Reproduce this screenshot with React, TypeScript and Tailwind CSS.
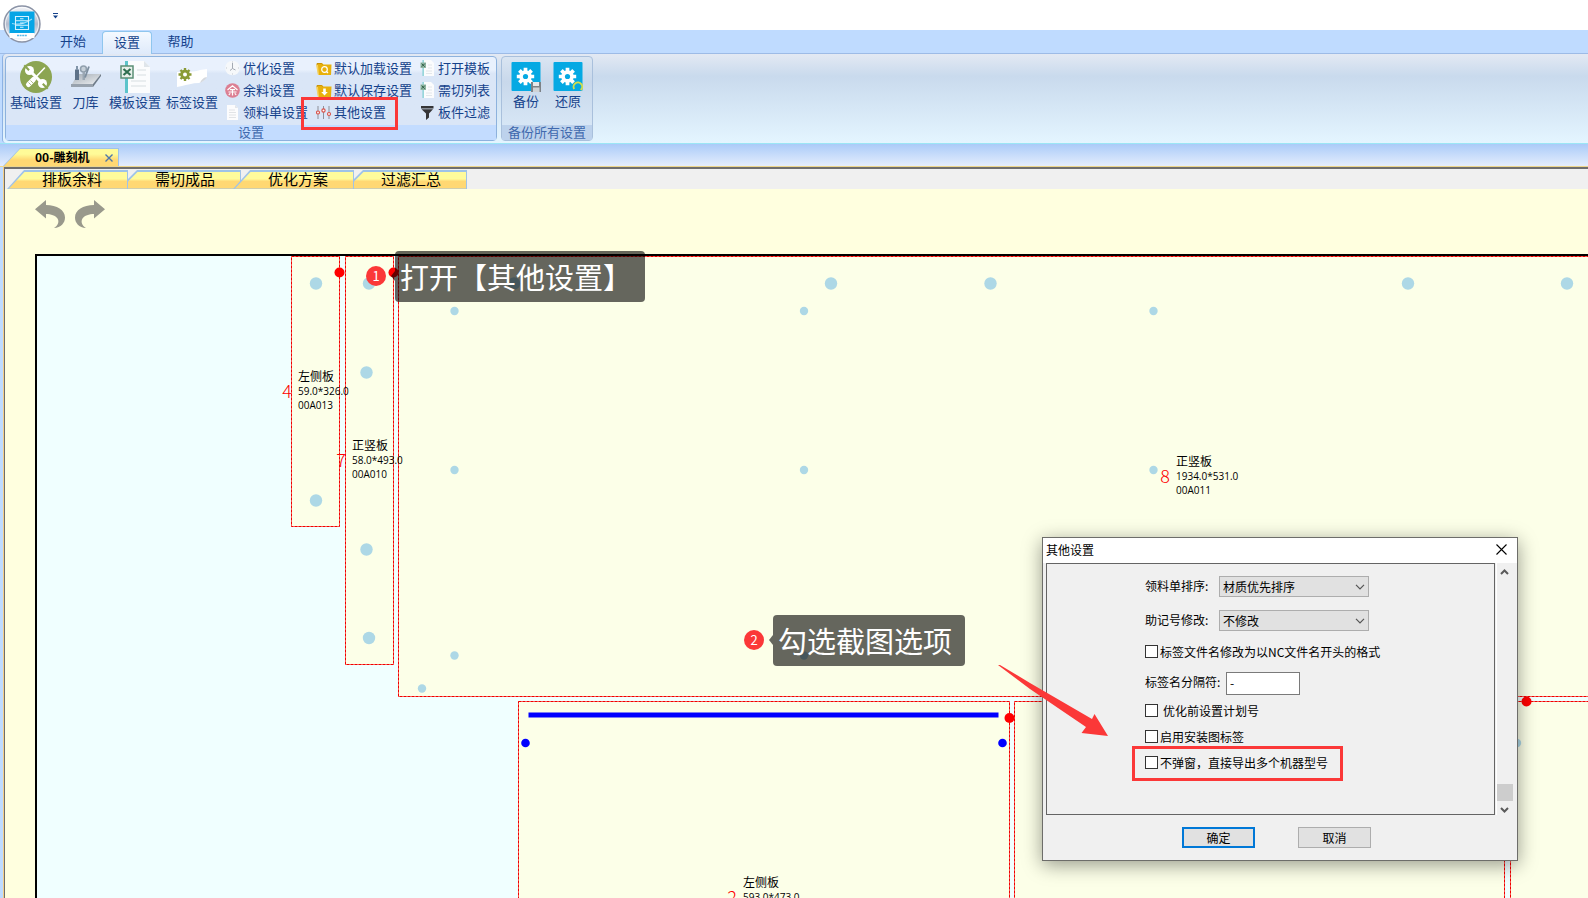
import React from "react";

type IconProps = { className?: string };

const panels = [
  { x: 254.5, y: 0.5, w: 48, h: 270 },
  { x: 308.5, y: 0.5, w: 48, h: 408 },
  { x: 361.5, y: 0.5, w: 1500, h: 440 },
  { x: 481.5, y: 445.5, w: 491, h: 600 },
  { x: 977.5, y: 445.5, w: 490, h: 600 },
  { x: 1473.5, y: 445.5, w: 600, h: 600 },
];

const largeHoles = [
  [279, 27.5], [279, 244.5], [332, 27.5], [329.5, 116.5], [329.5, 293.5], [332, 382],
  [477, 27.5], [794, 27.5], [953.5, 27.5], [1371, 27.5], [1530, 27.5],
];

const smallHoles = [
  [417.5, 55], [417.5, 214], [417.5, 399.5], [767, 55], [767, 214], [767, 399.5],
  [1116.5, 55], [1116.5, 214], [385, 432.5], [1480, 487],
];

const redDots = [[302.5, 16.5], [356.5, 16.5], [972.5, 462], [1489.5, 445.5]];
const blueDots = [[488.5, 487], [965.5, 487]];

const partLabels = [
  { id: "4", name: "左侧板", size: "59.0*326.0", code: "00A013", place: "left-[245px] top-[110px]" },
  { id: "7", name: "正竖板", size: "58.0*493.0", code: "00A010", place: "left-[299px] top-[179px]" },
  { id: "8", name: "正竖板", size: "1934.0*531.0", code: "00A011", place: "left-[1123px] top-[195px]" },
  { id: "2", name: "左侧板", size: "593.0*473.0", code: "", place: "left-[690px] top-[616px]" },
];

function AppOrb() {
  return (
    <svg viewBox="0 0 38 38" className="size-[38px]" aria-hidden="true">
      <defs>
        <linearGradient id="orb" x1="0" y1="0" x2="0" y2="1">
          <stop offset="0" stopColor="#f4f6fa" />
          <stop offset=".5" stopColor="#b4bccd" />
          <stop offset=".75" stopColor="#d9dfea" />
          <stop offset="1" stopColor="#ffffff" />
        </linearGradient>
      </defs>
      <circle cx="19" cy="19" r="18" fill="url(#orb)" stroke="#8b93a6" strokeWidth="1.4" />
      <circle cx="19" cy="19" r="16.6" fill="none" stroke="#fff" strokeOpacity=".7" />
      <rect x="6.500" y="6.500" width="25" height="22" fill="#06a5e6" />
      <rect x="6.500" y="28" width="25" height="5" fill="#fff" />
      <path d="M14 30.500h10" stroke="#56b8e8" strokeWidth="1.6" strokeDasharray="2 .6" />
      <g fill="none" stroke="#d6f2ff" strokeWidth="1.1">
        <path d="M12.500 11.500h13v13h-13zM12.500 15.800h13M12.500 20.200h13M17 13.700h3.500M17 18h3.500M17 22.300h3.500" />
        <path d="M9 18.500c6 1.500 14-.5 20-4.500" strokeOpacity=".7" />
      </g>
    </svg>
  );
}

function ToolsIcon() {
  return (
    <svg viewBox="0 0 32 32" className="size-8" aria-hidden="true">
      <circle cx="16" cy="16" r="16" fill="#8ca552" />
      <g stroke="#fff" strokeLinecap="round" fill="none">
        <path d="M9.500 9.500 22.500 22.500" strokeWidth="3" />
        <path d="M24.500 7 15 17" strokeWidth="1.600" />
        <path d="M13.500 18.500 8.500 23.500" strokeWidth="5" />
      </g>
      <circle cx="9.500" cy="9.500" r="4.500" fill="#fff" />
      <circle cx="22.500" cy="22.500" r="4.500" fill="#fff" />
      <path d="M5 3.500 9.800 8.400 8.300 9.900 3.500 5zM22 23.500l1.500-1.500 5 5-1.500 1.500z" fill="#8ca552" />
      <path d="M10.500 19.500 13 22M8.500 21.500l2.500 2.500" stroke="#8ca552" strokeWidth=".7" />
    </svg>
  );
}

function KnifeIcon() {
  return (
    <svg viewBox="0 0 32 32" className="size-8" aria-hidden="true">
      <defs>
        <linearGradient id="plate" x1="0" y1="0" x2="1" y2="1">
          <stop offset="0" stopColor="#a3acb5" />
          <stop offset="1" stopColor="#eceef0" />
        </linearGradient>
      </defs>
      <path d="M8 13h23l-8 10H2z" fill="url(#plate)" />
      <path d="M1 23h22v3H1z" fill="#98a2ad" />
      <path d="M23 23l8-10v2l-8 11z" fill="#6f7b87" />
      <path d="M5 8.500h4V19H5z" fill="#5d7188" />
      <path d="M6 5h2v4H6z" fill="#8194a8" />
      <circle cx="13.500" cy="8" r="3" fill="#c6d0d9" stroke="#91a0ae" strokeWidth="1.600" />
      <path d="M12.500 11h2.500v8h-2.500z" fill="#9aa7b3" />
      <path d="M19 5.500 15 16.500" stroke="#7d8e9f" strokeWidth="1.800" />
    </svg>
  );
}

function ExcelIcon() {
  return (
    <svg viewBox="0 0 32 32" className="size-8" aria-hidden="true">
      <path d="M7 0h18l6 6v26H7z" fill="#fbfcfd" />
      <path d="M25 0v6h6" fill="#dfe5ea" />
      <path d="M6 0h3v32H6z" fill="#5cc4cb" />
      <path d="M18 9h9M18 14h9M12 20h15M12 25h15" stroke="#d8dde2" strokeWidth="1.200" />
      <rect x="2" y="5" width="12" height="12" fill="#e8f0eb" stroke="#5b8f75" strokeWidth="1.500" />
      <path d="M4.500 8l7 6M11.500 8l-7 6" stroke="#2f6f50" strokeWidth="2.200" />
    </svg>
  );
}

function SmallExcelIcon() {
  return (
    <svg viewBox="0 0 16 16" className="size-4" aria-hidden="true">
      <path d="M3 0h8l3 3v13H3z" fill="#fbfcfd" />
      <path d="M2.500 0h1.300v16H2.500z" fill="#7fcdd2" />
      <path d="M8 5h4M8 8h4M6 11h6M6 13.500h6" stroke="#dde1e5" strokeWidth=".8" />
      <rect x=".5" y="2.500" width="5.500" height="5.500" fill="#8fb5a1" />
      <path d="M1.700 3.700l3 3M4.700 3.700l-3 3" stroke="#2f5f48" />
    </svg>
  );
}

function TagIcon() {
  return (
    <svg viewBox="0 0 32 32" className="size-8" aria-hidden="true">
      <path d="M1 11c7 0 17 0 23-2l7-1v8c-3 4-5 5-8 6-7 0-12 2-17 3l-5 1z" fill="#fff" />
      <path d="M24 22c1-3 4-6 7-6-1 2-3 4-7 6z" fill="#d5d9de" />
      <circle cx="9" cy="13.500" r="4.800" fill="#8a9b35" />
      <path d="M9 7v13M2.500 13.500h13M4.500 9l9 9M13.500 9l-9 9" stroke="#8a9b35" strokeWidth="2.400" />
      <circle cx="9" cy="13.500" r="2" fill="#fff" />
    </svg>
  );
}

function ClockIcon() {
  return (
    <svg viewBox="0 0 16 16" className="size-4" aria-hidden="true">
      <circle cx="7.500" cy="8" r="7.300" fill="#f6f8fa" />
      <path d="M7.500 3v5.500M5 10.500l2.500-2 3 1.500" stroke="#a3a9b2" fill="none" />
      <path d="M7.500 1.500v1M7.500 13.500v1M1 8h1M13 8h1" stroke="#c3c9d0" />
    </svg>
  );
}

function SurplusIcon() {
  return (
    <svg viewBox="0 0 16 16" className="size-4" aria-hidden="true">
      <circle cx="7.500" cy="8.500" r="7.300" fill="#dc7f93" />
      <path d="M2.500 8 7.500 3.700l5 4.300M5 7.700h5M3.500 10h8M7.500 7.700v5.800M5.300 11.300l-1.500 1.500M9.700 11.300l1.500 1.500" stroke="#fff" strokeWidth="1.200" fill="none" />
    </svg>
  );
}

function PageIcon() {
  return (
    <svg viewBox="0 0 16 16" className="size-4" aria-hidden="true">
      <path d="M2 1h8l3 3v12H2z" fill="#fcfcfd" />
      <path d="M4 6h6M4 8.500h7M4 11h7M4 13.500h7" stroke="#d9dcdf" strokeWidth=".8" />
      <path d="M10 1v3h3" fill="#e2e6ea" />
    </svg>
  );
}

function FolderIcon({ kind }: { kind: "load" | "save" }) {
  return (
    <svg viewBox="0 0 16 16" className="size-4" aria-hidden="true">
      <path d="M1 3h5l1.500 1.500H15.500L15 15H2z" fill="#e8b10c" />
      <path d="M0 5h2l1 10H2z" fill="#f5d262" />
      <path d="M1 5V3.500h4.500l1 1.200" stroke="#c8930a" fill="none" />
      {kind === "load" ? (
        <>
          <circle cx="8.500" cy="9.500" r="2.800" fill="none" stroke="#fff" strokeWidth="1.200" />
          <path d="M10.500 11.500 12 13" stroke="#fff" strokeWidth="1.200" />
        </>
      ) : (
        <path d="M7.200 6.500h2.600v3.500h2L8.500 13.500 5.200 10h2z" fill="#fff" />
      )}
    </svg>
  );
}

function SlidersIcon() {
  return (
    <svg viewBox="0 0 16 16" className="size-4" aria-hidden="true">
      <path d="M2 2v13M7.500 2v13M13 2v13" stroke="#8d8f99" />
      <g fill="#fff" stroke="#d9534a" strokeWidth="1.200">
        <circle cx="2" cy="8.500" r="1.500" />
        <circle cx="7.500" cy="6.500" r="1.600" />
        <circle cx="13" cy="10" r="1.500" />
      </g>
    </svg>
  );
}

function FunnelIcon() {
  return (
    <svg viewBox="0 0 16 16" className="size-4" aria-hidden="true">
      <path d="M1 2h12.500v2.500H1zM1.500 5.200h11.500L9 9.500v4L6 16V9.500z" fill="#353537" />
    </svg>
  );
}

function GearTile({ kind }: { kind: "save" | "restore" }) {
  return (
    <svg viewBox="0 0 30 30" className="size-[30px]" aria-hidden="true">
      <rect x=".5" width="29" height="29" rx="1" fill="#05a9e3" />
      <circle cx="14.500" cy="14.500" r="6.200" fill="#fff" />
      <path d="M14.500 5.800v17.400M5.800 14.500h17.400M8.400 8.400l12.200 12.200M20.600 8.400 8.400 20.600" stroke="#fff" strokeWidth="3.700" />
      <circle cx="14.500" cy="14.500" r="2.600" fill="#05a9e3" />
      {kind === "save" ? (
        <>
          <rect x="20" y="20" width="10" height="10" fill="#7d8287" />
          <rect x="22" y="20" width="6" height="4" fill="#e6e8ea" />
          <rect x="22" y="25.500" width="6.500" height="4.500" fill="#cfd3d6" />
        </>
      ) : (
        <path d="M21.200 27a4.300 4.300 0 1 1 6.500 1" fill="none" stroke="#d5dd4a" strokeWidth="1.900" />
      )}
    </svg>
  );
}

function TurnArrow({ className = "" }: IconProps) {
  return (
    <svg viewBox="0 0 30 28" className={`h-7 w-[30px] ${className}`} aria-hidden="true">
      <path d="M0 9.300 11 0v5c11 0 19 5 19 12.500C30 23 26 27.500 19 28c4-2.500 5.500-6.500 3.500-9.500C20.500 15.500 16 14 11 14v4.500z" fill="#99998c" />
    </svg>
  );
}

function BigButton({ icon, label, className = "" }: { icon: React.ReactNode; label: string; className?: string }) {
  return (
    <button type="button" className={`flex flex-col items-center gap-px whitespace-nowrap ${className}`}>
      {icon}
      <span className="leading-4">{label}</span>
    </button>
  );
}

function SmallButton({ icon, label, marked = false }: { icon: React.ReactNode; label: string; marked?: boolean }) {
  return (
    <button type="button" className="relative flex h-[22px] items-center gap-0.5 whitespace-nowrap">
      {icon}
      <span className="pb-px leading-[18px]">{label}</span>
      {marked && <span className="absolute -top-1 -right-3 -bottom-[7px] -left-[15px] z-10 border-3 border-[#fb3838]" />}
    </button>
  );
}

function SheetTab({ label, full }: { label: string; full: boolean }) {
  return (
    <button
      type="button"
      className={
        full
          ? "relative z-10 -ml-2 h-[19px] w-[121px] bg-[#9fc3e8] pt-px text-left [clip-path:polygon(0_100%,17px_0,100%_0,100%_100%)]"
          : "relative h-[19px] w-[113px] bg-[#9fc3e8] pt-px text-left [clip-path:polygon(0_100%,0_9px,9px_0,100%_0,100%_100%)]"
      }
    >
      <span
        className={
          full
            ? "mr-px block h-[17px] bg-linear-to-b from-[#fffb9c] from-40% to-[#ffd873] to-55% pl-[35px] [clip-path:polygon(2px_100%,18px_0,100%_0,100%_100%)]"
            : "mr-px block h-[17px] bg-linear-to-b from-[#fffb9c] from-40% to-[#ffd873] to-55% pl-[27px] [clip-path:polygon(0_100%,0_10px,10px_0,100%_0,100%_100%)]"
        }
      >
        <span className="block text-[15px] leading-[13px] text-black">{label}</span>
      </span>
    </button>
  );
}

function Ribbon() {
  return (
    <section className="border-y border-t-[#9dbbe6] border-b-[#9be6f5] bg-[#bfdbff] pl-0.5">
      <div className="flex h-[89px] gap-1 rounded-l border-l border-[#8db2e3] bg-linear-to-b from-[#e3e9f3] via-[#c9daed] via-25% to-[#e4f5ff] px-0.5 pt-0.5 text-[13px] text-[#15428b]">
        <div className="flex h-[85px] w-[492px] flex-col rounded-sm border border-[#8db2dd] bg-linear-to-b from-[#e9f1fd] from-15% to-[#dae6f7] to-20%">
          <div className="flex flex-1 pl-1">
            <div className="flex gap-[5px] pt-1">
              <BigButton icon={<ToolsIcon />} label="基础设置" className="w-[52px]" />
              <BigButton icon={<KnifeIcon />} label="刀库" className="w-[37px]" />
              <BigButton icon={<ExcelIcon />} label="模板设置" className="w-[52px]" />
              <BigButton icon={<TagIcon />} label="标签设置" className="w-[52px]" />
            </div>
            <div className="flex gap-2 pl-[7px]">
              <div className="flex w-[83px] flex-col">
                <SmallButton icon={<ClockIcon />} label="优化设置" />
                <SmallButton icon={<SurplusIcon />} label="余料设置" />
                <SmallButton icon={<PageIcon />} label="领料单设置" />
              </div>
              <div className="flex w-24 flex-col items-start">
                <SmallButton icon={<FolderIcon kind="load" />} label="默认加载设置" />
                <SmallButton icon={<FolderIcon kind="save" />} label="默认保存设置" />
                <SmallButton icon={<SlidersIcon />} label="其他设置" marked />
              </div>
              <div className="flex flex-col">
                <SmallButton icon={<SmallExcelIcon />} label="打开模板" />
                <SmallButton icon={<SmallExcelIcon />} label="需切列表" />
                <SmallButton icon={<FunnelIcon />} label="板件过滤" />
              </div>
            </div>
          </div>
          <div className="h-[15px] bg-[#c3dcff] text-center leading-[13px] text-[#4069ae]">设置</div>
        </div>
        <div className="flex h-[85px] w-[92px] flex-col rounded-sm border border-[#a9c0dc] bg-linear-to-b from-[#dae5f2] via-[#c8d8eb] via-30% to-[#dcebf9]">
          <div className="flex flex-1 justify-center gap-3 pt-[5px]">
            <BigButton icon={<GearTile kind="save" />} label="备份" />
            <BigButton icon={<GearTile kind="restore" />} label="还原" />
          </div>
          <div className="h-[15px] bg-[#bdd2ec] text-center leading-[13px] text-[#4069ae]">备份所有设置</div>
        </div>
      </div>
    </section>
  );
}

function Sheet() {
  return (
    <div className="relative ml-[30px] flex-1 overflow-hidden border-t-2 border-l-2 border-black bg-[#f0ffff]">
      <svg className="absolute inset-0 size-full" aria-hidden="true">
        {panels.map((p) => (
          <g key={`${p.x}-${p.y}`}>
            <rect x={p.x} y={p.y} width={p.w} height={p.h} fill="#fcffe8" stroke="#ffa79c" />
            <rect x={p.x} y={p.y} width={p.w} height={p.h} fill="none" stroke="#f00000" strokeDasharray="3 1" />
          </g>
        ))}
        {largeHoles.map(([x, y]) => (
          <circle key={`${x}-${y}`} cx={x} cy={y} r="6.2" fill="#add8e6" />
        ))}
        {smallHoles.map(([x, y]) => (
          <circle key={`${x}-${y}`} cx={x} cy={y} r="4.2" fill="#add8e6" />
        ))}
        <rect x="491.5" y="456.5" width="470" height="5" fill="#0000ff" />
        {blueDots.map(([x, y]) => (
          <circle key={x} cx={x} cy={y} r="4.3" fill="#0000ff" />
        ))}
        {redDots.map(([x, y]) => (
          <circle key={x} cx={x} cy={y} r="5" fill="#ff0000" />
        ))}
      </svg>
      {partLabels.map((p) => (
        <div key={p.id} className={`absolute flex h-12 items-center gap-1.5 whitespace-nowrap ${p.place}`}>
          <span className="w-2.5 text-center font-['Noto_Sans_CJK_SC',sans-serif] text-[18px] leading-[44px] font-light text-[#ff0000]">{p.id}</span>
          <span className="flex h-11 flex-col text-black">
            <span className="text-[12px] leading-4">{p.name}</span>
            <span className="font-['Open_Sans','Noto_Sans_CJK_SC',sans-serif] text-[10px] leading-[14px]">{p.size}</span>
            {p.code && <span className="font-['Open_Sans','Noto_Sans_CJK_SC',sans-serif] text-[10px] leading-[14px]">{p.code}</span>}
          </span>
        </div>
      ))}
    </div>
  );
}

function SelectRow({ id, label, value }: { id: string; label: string; value: string }) {
  return (
    <div className="flex h-[21px] items-center">
      <label htmlFor={id} className="w-[74px] pb-px">{label}</label>
      <div className="relative">
        <select id={id} defaultValue={value} className="block h-[21px] w-[150px] appearance-none border border-[#adadad] bg-[#e1e1e1] pl-[3px] text-[12px] leading-[19px]">
          <option>{value}</option>
        </select>
        <svg viewBox="0 0 10 6" className="pointer-events-none absolute top-2 right-1 h-1.5 w-2.5" aria-hidden="true">
          <path d="M1 .8 5 4.800 9 .8" fill="none" stroke="#555" strokeWidth="1.200" />
        </svg>
      </div>
    </div>
  );
}

function CheckRow({ label, gap = "gap-0.5" }: { label: string; gap?: string }) {
  return (
    <label className={`flex h-[13px] items-center whitespace-nowrap ${gap}`}>
      <input type="checkbox" className="size-[13px] appearance-none border border-[#333] bg-white checked:bg-[#0078d7]" />
      <span className="leading-[13px]">{label}</span>
    </label>
  );
}

function SettingsDialog() {
  return (
    <div
      role="dialog"
      aria-label="其他设置"
      className="absolute top-[537px] left-[1042px] z-20 flex w-[476px] flex-col border border-[#6d6d6a] bg-[#f0f0f0] text-[12px] text-black shadow-[0_4px_18px_rgba(0,0,0,0.4)]"
    >
      <header className="flex h-[25px] items-center justify-between bg-white pr-2.5 pb-0.5 pl-[3px]">
        <h2>其他设置</h2>
        <button type="button" aria-label="关闭">
          <svg viewBox="0 0 11 11" className="size-[11px]" aria-hidden="true">
            <path d="M.5.5l10 10M10.500.5l-10 10" stroke="#000" strokeWidth="1.100" />
          </svg>
        </button>
      </header>
      <div className="flex pl-[3px]">
        <div className="flex h-[252px] w-[449px] flex-col border border-[#646464] pt-3 pl-[98px]">
          <SelectRow id="order" label="领料单排序:" value="材质优先排序" />
          <div className="pt-[13px] pb-3.5">
            <SelectRow id="memo" label="助记号修改:" value="不修改" />
          </div>
          <CheckRow label="标签文件名修改为以NC文件名开头的格式" />
          <div className="mt-3.5 flex h-[23px] items-center gap-1">
            <label htmlFor="separator" className="w-[77px] pb-1 whitespace-nowrap">标签名分隔符:</label>
            <input id="separator" type="text" defaultValue="-" className="h-[23px] w-[74px] border border-[#7a7a7a] bg-white px-[3px] pb-0.5" />
          </div>
          <div className="flex flex-col gap-[13px] pt-[9px]">
            <CheckRow label="优化前设置计划号" gap="gap-[5px]" />
            <CheckRow label="启用安装图标签" />
            <div className="relative">
              <CheckRow label="不弹窗，直接导出多个机器型号" />
              <span className="absolute -top-[10px] -left-[13px] h-[35px] w-[211px] border-3 border-[#fb3838]" />
            </div>
          </div>
        </div>
        <div className="ml-px flex w-4 flex-col items-center border-l border-white pt-1.5">
          <svg viewBox="0 0 9 6" className="h-1.5 w-[9px]" aria-hidden="true">
            <path d="M1 5 4.500 1.500 8 5" fill="none" stroke="#5a5a5a" strokeWidth="2" />
          </svg>
          <div className="mt-auto h-[17px] w-4 bg-[#cdcdcd]" />
          <svg viewBox="0 0 9 6" className="mt-1.5 mb-0.5 h-1.5 w-[9px]" aria-hidden="true">
            <path d="M1 1 4.500 4.500 8 1" fill="none" stroke="#5a5a5a" strokeWidth="2" />
          </svg>
        </div>
      </div>
      <footer className="flex gap-[43px] pt-3 pb-3 pl-[139px]">
        <button type="button" className="h-[21px] w-[73px] border-2 border-[#0078d7] bg-[#e1e1e1] leading-[18px]">确定</button>
        <button type="button" className="h-[21px] w-[73px] border border-[#adadad] bg-[#e1e1e1] leading-5">取消</button>
      </footer>
    </div>
  );
}

function Callout({ step, text, place, width }: { step: string; text: string; place: string; width: string }) {
  return (
    <div className={`absolute z-10 flex items-start text-white ${place}`}>
      <span className="mt-[15px] flex size-5 items-center justify-center rounded-full bg-[#fb3838] text-[13px] leading-5">{step}</span>
      <svg viewBox="0 0 4 10" className="mt-5 ml-[5px] h-2.5 w-1" aria-hidden="true">
        <path d="M4 0v10L0 5z" fill="#000" fillOpacity=".6" />
      </svg>
      <span className={`h-[51px] rounded bg-black/60 pl-[5px] text-[29px] leading-[51px] whitespace-nowrap ${width}`}>{text}</span>
    </div>
  );
}

export default function App() {
  return (
    <div className="relative flex h-screen flex-col overflow-hidden bg-[#bfdbff] font-['Noto_Sans_CJK_SC',sans-serif]">
      <header className="relative h-[30px] bg-white">
        <button type="button" aria-label="应用菜单" className="absolute top-[5px] left-[3px] z-10">
          <AppOrb />
        </button>
        <button type="button" aria-label="自定义工具栏" className="absolute top-[13px] left-[53px]">
          <svg viewBox="0 0 5 6" className="h-1.5 w-[5px]" aria-hidden="true">
            <path d="M0 0h5v1H0zM0 2.500h5L2.500 5.500z" fill="#15428b" />
          </svg>
        </button>
      </header>
      <nav className="flex h-[23px] items-end pl-[44px] text-[13px] text-[#15428b]">
        <button type="button" className="h-[22px] w-[58px] pb-0.5 leading-5">开始</button>
        <button type="button" className="relative -mb-px h-[23px] w-[50px] rounded-t border border-b-0 border-[#8fc6ee] bg-linear-to-b from-[#f4f9ff] to-[#dfeafa] pb-0.5 leading-5">设置</button>
        <button type="button" className="h-[22px] w-[57px] pb-0.5 leading-5">帮助</button>
      </nav>
      <Ribbon />
      <div className="flex h-[23px] items-end border-b border-[#ecd58c] bg-linear-to-b from-[#abcbf8] to-[#e4edfc] pl-[3px]">
        <button type="button" className="h-[18px] w-[116px] bg-[#9fc3e8] pt-px pr-px text-left [clip-path:polygon(0_100%,17px_0,100%_0,100%_100%)]">
          <span className="flex h-[17px] items-center justify-between bg-linear-to-b from-[#fffb98] from-30% to-[#ffd873] to-65% pr-[5px] pb-0.5 pl-8 text-[12px] leading-4 font-bold text-black [clip-path:polygon(1px_100%,17px_0,100%_0,100%_100%)]">
            00-雕刻机
            <svg viewBox="0 0 8 8" className="mt-0.5 size-2" aria-hidden="true">
              <path d="M.5.5l7 7M7.500.5l-7 7" stroke="#4f78a8" strokeWidth="1.400" />
            </svg>
          </span>
        </button>
      </div>
      <div className="flex min-h-0 flex-1 pl-[3px]">
        <div className="flex min-w-0 flex-1 flex-col border-l border-[#f5cf85]">
          <div className="flex min-h-0 flex-1 flex-col border-t-2 border-l border-[#6e6e6e] bg-[#ffffdf]">
            <div className="flex h-5 bg-[#f0f0f0] pt-px pl-2.5">
              <SheetTab label="排板余料" full />
              <SheetTab label="需切成品" full={false} />
              <SheetTab label="优化方案" full />
              <SheetTab label="过滤汇总" full={false} />
            </div>
            <div className="flex gap-2.5 pt-[11px] pb-[26px] pl-[30px]">
              <button type="button" aria-label="撤销"><TurnArrow /></button>
              <button type="button" aria-label="重做"><TurnArrow className="-scale-x-100" /></button>
            </div>
            <Sheet />
          </div>
        </div>
      </div>
      <Callout step="1" text="打开【其他设置】" place="left-[366px] top-[251px]" width="w-[250px]" />
      <Callout step="2" text="勾选截图选项" place="left-[744px] top-[615px]" width="w-[192px]" />
      <SettingsDialog />
      <svg viewBox="0 0 110 72" className="pointer-events-none absolute top-[665px] left-[998px] z-30 h-[72px] w-[110px]" aria-hidden="true">
        <path d="M0 0h2L32 18 94 54 96.500 49 110 71 83.500 68 88 62 32 24z" fill="#fb3838" />
      </svg>
    </div>
  );
}
